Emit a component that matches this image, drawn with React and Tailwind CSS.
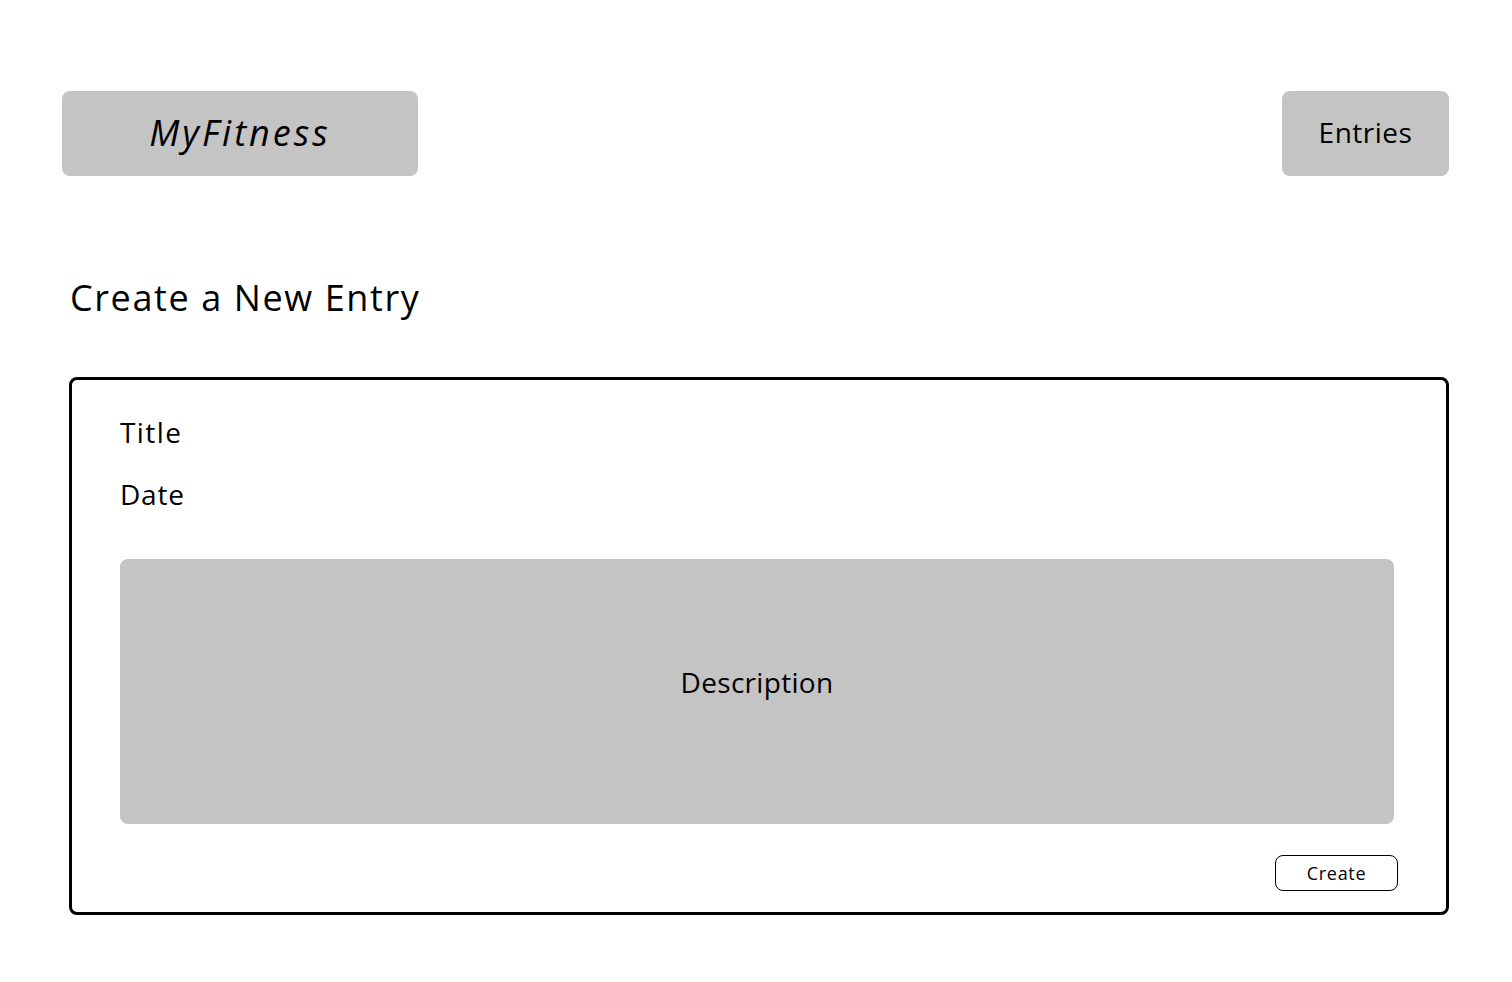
// Create-entry page for the fitness log

const FONT = { fontFamily: '"Open Sans", "Noto Sans", sans-serif' };

function Header() {
    return (
        <div className="flex items-start justify-between">
            <div className="w-[356px] h-[85px] rounded-lg bg-[#c4c4c4] flex items-center justify-center pb-[2px]">
                <span className="text-[36px] italic tracking-[3px] text-black">MyFitness</span>
            </div>
            <button className="w-[167px] h-[85px] rounded-lg bg-[#c4c4c4] flex items-center justify-center pb-[3px] text-[28px] tracking-[0.5px] text-black">
                Entries
            </button>
        </div>
    );
}

function EntryForm() {
    return (
        <div className="ml-[7px] mt-[55px] border-[3px] border-black rounded-lg pl-[48px] pr-[48px] pt-[34px] pb-[21px]">
            <p className="text-[28px] leading-[36px] tracking-[1.4px] text-black">Title</p>
            <p className="mt-[26px] text-[28px] leading-[36px] tracking-[0.8px] text-black">Date</p>
            <div className="mt-[47px] mr-[4px] h-[265px] rounded-lg bg-[#c4c4c4] flex items-center justify-center pb-[20px]">
                <span className="text-[28px] tracking-[0.3px] text-black">Description</span>
            </div>
            <div className="mt-[31px] flex justify-end">
                <button className="w-[123px] h-[36px] rounded-lg border border-black bg-white text-[18px] tracking-[0.7px] text-black">
                    Create
                </button>
            </div>
        </div>
    );
}

export default function App() {
    return (
        <div className="min-h-screen bg-white px-[62px] pr-[63px] pt-[91px]" style={FONT}>
            <Header />
            <h1 className="ml-[8px] mt-[98px] text-[36px] leading-[48px] tracking-[1.6px] font-normal text-black">Create a New Entry</h1>
            <EntryForm />
        </div>
    );
}
